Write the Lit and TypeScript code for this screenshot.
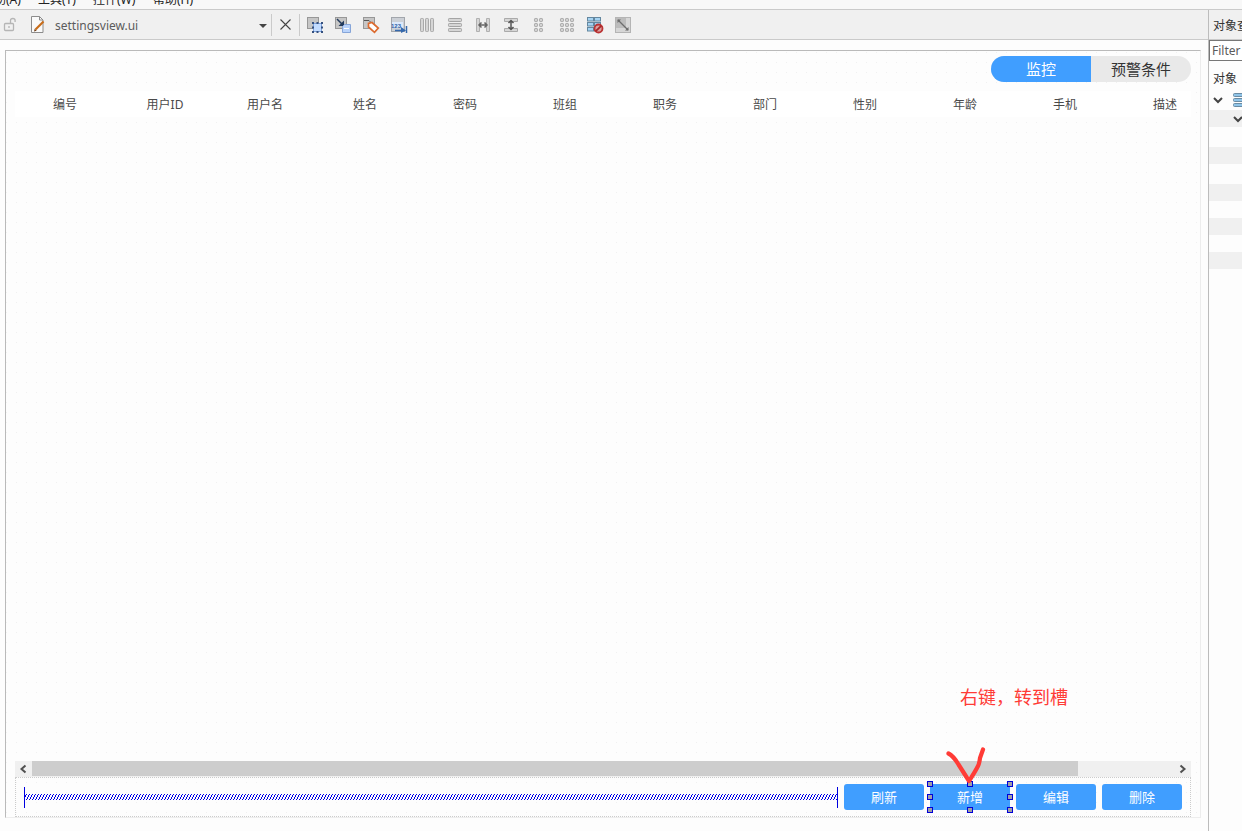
import { LitElement, html, css, svg } from "lit";
import { customElement } from "lit/decorators.js";

const COLUMNS = ["编号", "用户ID", "用户名", "姓名", "密码", "班组", "职务", "部门", "性别", "年龄", "手机", "描述"];
const MENUS = ["帮助(A)", "工具(T)", "控件(W)", "帮助(H)"];
const bars = [0, 1, 2];

const sheet = svg`<rect x=".5" y=".5" width="11" height="11" fill="#c6c6c6" stroke="#979797"/>`;

const TOOLS = [
  svg`${sheet}
    <rect x="6.500" y="6.500" width="8" height="8" fill="#c3dcff" stroke="#7fa3de"/>
    <path d="M5 5h2v2H5zM9.500 5h2v2h-2zM14 5h2v2h-2zM5 9.500h2v2H5zM14 9.500h2v2h-2zM5 14h2v2H5zM9.500 14h2v2h-2zM14 14h2v2h-2z" fill="#34507f"/>`,
  svg`${sheet}
    <path d="M2 2l5 5" stroke="#243b5c" stroke-width="1.500"/><path d="M9 3.500V9H3.500z" fill="#243b5c"/>
    <path d="M9.500 7.500h6v8h-8v-6z" fill="#b9d3fb" stroke="#86a5d8"/><path d="M9 11.500h5" stroke="#fff"/>`,
  svg`${sheet}
    <path d="M1 3.500h5l3 3" fill="none" stroke="#555"/>
    <path d="M9 5.500l6.300 5.500-3.800 4.300L5.500 10V6.500z" fill="#fff" stroke="#dc6b30" stroke-width="1.700"/>`,
  svg`<rect x=".5" y=".5" width="13" height="14" fill="#ccd0d6" stroke="#a2a6ac"/>
    <rect x="1" y="5" width="11" height="6" fill="#dce9fb"/>
    <text x="0" y="10.500" class="digits">123</text><path d="M4 13.500h7M15.500 9v7" stroke="#3569ad" stroke-width="1.500"/><path d="M10 10l5 3.500-5 2.500z" fill="#3569ad"/>`,
  bars.map((i) => svg`<rect x="${1.5 + i * 5}" y="1.500" width="3" height="13" rx=".8" fill="#d6d6d6" stroke="#a9a9a9"/>`),
  bars.map((i) => svg`<rect x="1.500" y="${1.5 + i * 5}" width="13" height="3" rx=".8" fill="#d6d6d6" stroke="#a4a4a4"/>`),
  svg`<path d="M1.500 1.500h3v13h-3zM11.500 1.500h3v13h-3z" fill="#d6d6d6" stroke="#b0b0b0"/><path d="M4 8h8M6.500 5.500L4 8l2.500 2.500M9.500 5.500L12 8l-2.500 2.500" fill="none" stroke="#666" stroke-width="1.500"/>`,
  svg`<path d="M1.500 1.500h13v3h-13zM1.500 11.500h13v3h-13z" fill="#d6d6d6" stroke="#aaa"/><path d="M8 4v8M5.500 6L8 3.500 10.500 6M5.500 10L8 12.500 10.500 10" fill="none" stroke="#555" stroke-width="1.500"/>`,
  bars.map((r) => [0, 1].map((c) => svg`<rect x="${3.5 + c * 5}" y="${1.5 + r * 5}" width="3" height="3" rx=".8" fill="#d2d2d2" stroke="#a4a4a4"/>`)),
  bars.map((r) => bars.map((c) => svg`<rect x="${1.5 + c * 5}" y="${1.5 + r * 5}" width="3" height="3" rx=".8" fill="#d2d2d2" stroke="#a4a4a4"/>`)),
  svg`${bars.map((r) => [0, 1].map((c) => svg`<rect x="${0.5 + c * 7}" y="${0.5 + r * 5}" width="6" height="3.500" fill="#a5d3f2" stroke="#64879f"/>`))}
    <circle cx="11.500" cy="11.500" r="4" fill="#dba0a0" stroke="#bb3434" stroke-width="1.800"/><path d="M8.800 14.200l5.400-5.400" stroke="#a52828" stroke-width="1.800"/>`,
  svg`<rect x=".5" y=".5" width="15" height="15" fill="#d6d6d6" stroke="#b4b4b4"/><path d="M1 1h10v10H1z" fill="#bcbcbc"/>
    <path d="M3 3l10 10" stroke="#6c6c6c" stroke-width="1.200"/><path d="M2.500 2.500h3.500L2.500 6zM13.500 13.500H10l3.500-3.500z" fill="#6c6c6c"/>`,
];

/* Tree rows of the object inspector below the root: height and striping. */
const ROWS = [[17, 1], [20, 0], [17, 1], [20, 0], [17, 1], [17, 0], [17, 1], [17, 0], [17, 1]];
const chevron = html`<svg width="10" height="6"><path d="M1 1l4 4 4-4" fill="none" stroke="#444" stroke-width="2"/></svg>`;

@customElement("app-root")
export class AppRoot extends LitElement {
  static styles = css`
    :host { display: block; width: 1242px; height: 831px; overflow: hidden; background: #fdfdfd; color: #4a4a4a;
      font: 13px/18px "Noto Sans", "Noto Sans CJK SC", sans-serif; }
    * { box-sizing: border-box; }
    svg { display: block; flex: none; overflow: visible; }
    .menubar { height: 10px; overflow: hidden; background: #f8f8f8; border-bottom: 1px solid #cacaca; display: flex; align-items: flex-end; padding-bottom: 2px; color: #222; font-size: 12px; }
    .menu { height: 15px; line-height: 15px; white-space: nowrap; flex: none; }
    .menu-0 { margin-left: -18px; width: 56px; }
    .menu-1 { width: 55px; }
    .menu-2 { width: 60px; }
    .body { display: grid; grid-template-columns: 1208px 34px; height: 821px; }
    .main { min-width: 0; }
    .toolbar { height: 30px; background: #f0f0f0; border-bottom: 1px solid #cacaca; display: flex; align-items: center; padding-left: 3px; }
    .file { display: flex; align-items: center; width: 268px; }
    .doc { margin-left: 13px; }
    .name { margin-left: 10px; flex: 1; font-size: 12px; color: #5b5b5b; padding-top: 2px; }
    .caret { margin: 3px 4px 0 0; }
    .close { width: 29px; height: 22px; border: solid #cacaca; border-width: 0 1px; display: flex; align-items: center; justify-content: center; }
    .tools { display: flex; gap: 12px; padding-left: 7px; }
    .digits { font: bold 6px "Liberation Sans", sans-serif; fill: #2e60a5; }
    .form { margin: 10px 0 0 5px; width: 1196px; height: 768px; border: 1px solid #ededed; border-top-color: #bababa; border-left-color: #bababa;
      padding: 5px 9px 0; display: flex; flex-direction: column;
      background: conic-gradient(at 1px 1px, transparent 75%, #f0f0f0 0) 0 1px / 10px 10px; }
    .tabs { align-self: flex-end; display: flex; width: 200px; height: 26px; border-radius: 13px; overflow: hidden; background: #e9e9e9; color: #333; font-size: 15px; line-height: 26px; text-align: center; }
    .tab { width: 100px; }
    .tab-on { background: #409eff; color: #fff; }
    .heads { margin-top: 9px; height: 26px; width: 1176px; overflow: hidden; display: flex; background: #fff; font-size: 12px; line-height: 28px; text-align: center; flex: none; }
    .head { flex: 0 0 100px; height: 26px; }
    .space { flex: 1; }
    .scroll { height: 16px; display: flex; background: #f0f0f0; align-items: flex-start; width: 1176px; flex: none; }
    .thumb { width: 1046px; height: 15px; background: #cdcdcd; }
    .end { width: 17px; height: 15px; display: flex; align-items: center; justify-content: center; }
    .track { flex: 1; }
    .actions { height: 40px; width: 1176px; border: 1px dotted #ccc; display: flex; align-items: center; gap: 6px; padding: 0 8px; flex: none; }
    .button { width: 80px; height: 26px; border-radius: 3px; background: #409eff; color: #fff; font-size: 13px; line-height: 26px; text-align: center; position: relative; }
    .selected { border-radius: 0; }
    .handles { position: absolute; left: -3px; top: -3px; }
    .note { position: absolute; left: 30px; top: -101px; width: 120px; text-align: left; color: #ff3b36; font-size: 18px; line-height: 28px; white-space: nowrap; }
    .mark { position: absolute; left: 15px; top: -38px; }
    .side { border-left: 1px solid #bcbcbc; overflow: hidden; font-size: 12px; color: #333; white-space: nowrap; }
    .side-title { height: 30px; padding: 7px 0 0 4px; background: #f0f0f0; border-bottom: 1px solid #cacaca; }
    .filter { height: 21px; width: 60px; border: 1px solid #777; background: #fff; padding: 1px 0 0 2px; color: #5b5b5b; }
    .side-head { height: 29px; padding: 9px 0 0 4px; }
    .row { height: 17px; display: flex; align-items: center; padding-left: 4px; gap: 10px; }
    .tall { height: 20px; }
    .row-child { padding-left: 24px; }
    .shade { background: #f0f0f0; }
  `;

  render() {
    return html`
      <div class="menubar">${MENUS.map((m, i) => html`<span class="menu menu-${i}">${m}</span>`)}</div>
      <div class="body">
        <div class="main">
          <div class="toolbar">
            <div class="file">
              <svg width="14" height="15" fill="none" stroke="#b5b5b5" stroke-width="1.300"><rect x="1.500" y="6.500" width="9" height="7" rx="1"/><path d="M7.500 6V3.500q0-2 2.300-2t2.300 2V5"/><path d="M6 9v2"/></svg>
              <svg class="doc" width="15" height="17"><path d="M1.500.5h8l3.500 3.500v12.500H1.500z" fill="#fafafa" stroke="#8c8c8c"/><path d="M9.500.5V4H13" fill="none" stroke="#8c8c8c"/><path d="M5.500 13.500l8-8" stroke="#c86c19" stroke-width="2.200"/><path d="M4 15.500l.7-2.700 2 2z" fill="#734019"/></svg>
              <span class="name">settingsview.ui</span>
              <svg class="caret" width="8" height="5"><path d="M0 0h8L4 4z" fill="#444"/></svg>
            </div>
            <div class="close"><svg width="11" height="11"><path d="M.5.5l10 10M10.500.5l-10 10" stroke="#444" stroke-width="1.100"/></svg></div>
            <div class="tools">${TOOLS.map((t) => html`<svg width="16" height="16">${t}</svg>`)}</div>
          </div>
          <div class="form">
            <div class="tabs"><div class="tab tab-on">监控</div><div class="tab">预警条件</div></div>
            <div class="heads">${COLUMNS.map((c) => html`<div class="head">${c}</div>`)}</div>
            <div class="space"></div>
            <div class="scroll">
              <div class="end"><svg width="7" height="8"><path d="M5.500.5L1.500 4l4 3.500" fill="none" stroke="#505050" stroke-width="2"/></svg></div>
              <div class="thumb"></div><div class="track"></div>
              <div class="end"><svg width="6" height="8"><path d="M.5.5l4 3.500-4 3.500" fill="none" stroke="#505050" stroke-width="2"/></svg></div>
            </div>
            <div class="actions">
              <svg width="814" height="21"><defs><pattern id="coil" width="3" height="6" y="7" patternUnits="userSpaceOnUse"><path d="M2 0h1v1H2zM1 1h1v2H1zM0 4h1v1H0zM0 3h1v1H0zM2 5h1v1H2z" fill="#0000e8"/></pattern></defs>
                <rect x="1" y="7" width="812" height="6" fill="url(#coil)"/><path d="M.5 0v21M813.500 0v21" stroke="#0000e0"/></svg>
              <div class="button">刷新</div>
              <div class="button selected">新增
                <svg class="handles" width="86" height="32">${[0, 40, 80].map((x) => [0, 13, 26].map((y) => x === 40 && y === 13 ? "" : svg`<rect x="${x + 0.5}" y="${y + 0.5}" width="5" height="5" fill="#a0a0a4" stroke="#0000d8"/>`))}</svg>
                <svg class="mark" width="42" height="38"><path d="M3.500 7.500q5 2.500 10 11L24 35q6-9 9-15 1.500-3 2-8l3-8.500" fill="none" stroke="#ff3b36" stroke-width="4.200" stroke-linecap="round" stroke-linejoin="round"/></svg>
                <div class="note">右键，转到槽</div>
              </div>
              <div class="button">编辑</div>
              <div class="button">删除</div>
            </div>
          </div>
        </div>
        <div class="side">
          <div class="side-title">对象查看器</div>
          <div class="filter">Filter</div>
          <div class="side-head">对象</div>
          <div class="row tall">${chevron}
            <svg width="16" height="16">${bars.map((i) => svg`<rect x=".5" y="${1.5 + i * 5}" width="15" height="3" rx="1" fill="#8fc4e8" stroke="#6a8ba3"/>`)}</svg></div>
          ${ROWS.map(([h, shade], i) => html`<div class="row row-child ${h === 20 ? "tall" : ""} ${shade ? "shade" : ""}">${i ? "" : chevron}</div>`)}
        </div>
      </div>`;
  }
}
